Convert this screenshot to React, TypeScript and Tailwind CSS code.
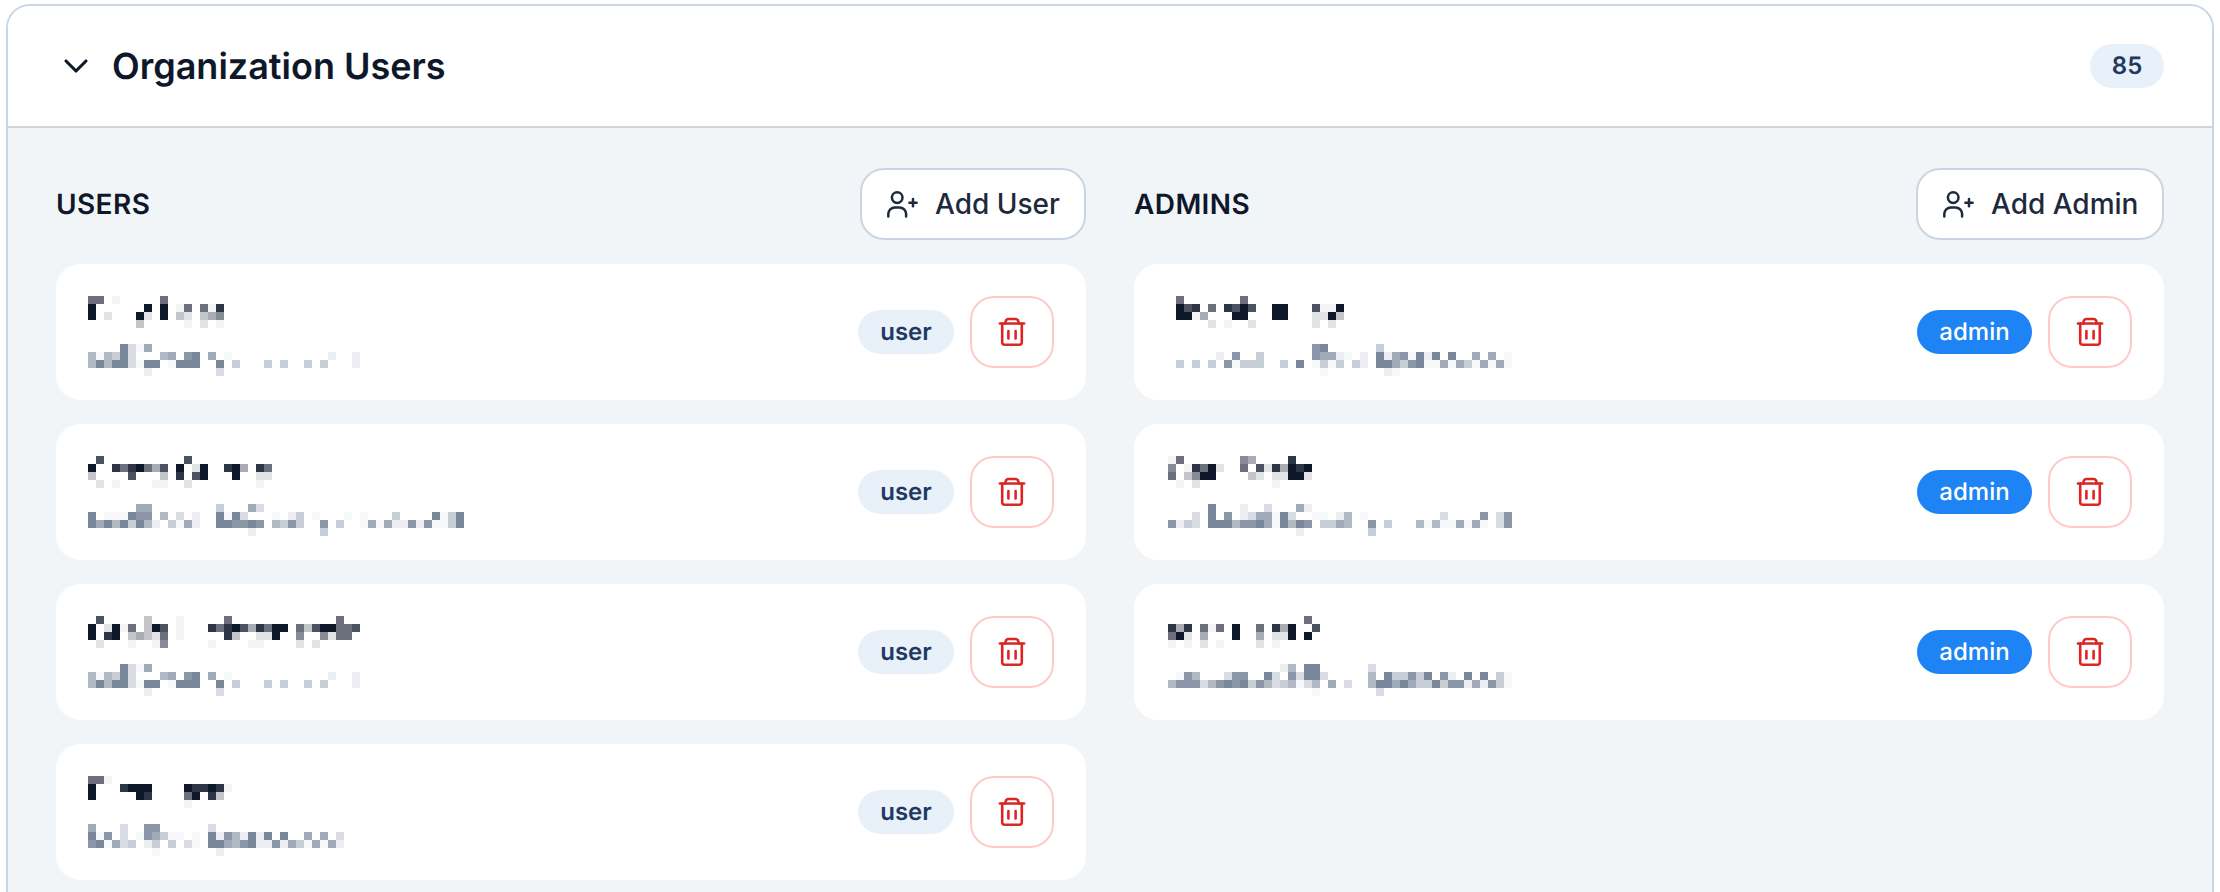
import { ChevronDown } from "lucide-react";

// names and emails are masked in the source picture, so each is a grid of shade digits
const OPACITY: Record<string, number> = {
  "1": 0.05,
  "2": 0.12,
  "3": 0.25,
  "4": 0.36,
  "5": 0.5,
  "6": 0.62,
  "7": 0.75,
  "8": 0.87,
  "9": 1,
};

interface Member {
  name: string[];
  email: string[];
}

const email1 = [
  "....8316",
  "515483...56.78.6.1............2..2",
  "585883188.1888..8.4...4.4..4.4...2",
  ".......2........3",
];

const users: Member[] = [
  {
    name: [
      "66.1.....6",
      "9......9.9.16.618",
      "9.2...92.9.32.345",
      "......3.....1.2.1",
    ],
    email: email1,
  },
  {
    name: [
      ".7..........7",
      "9..8689647.9.29..894.86",
      "3....7...3.8.79...9..22",
      ".2.1....11..2........1",
    ],
    email: [
      "......66........4...63",
      "8.111877.5.3.2..8183...1.24.1...1.1...4....8148",
      "868584852.4162..887787.5474..7.4..1616227271148",
      "....................2........4",
    ],
  },
  {
    name: [
      ".7.....3...1.....6.............6",
      "9.2916.397.1...8689748699.63799667",
      "9.89.34326.1.....83..229..5..5266",
      ".2...1..15.....1....11....2.2",
    ],
    email: email1,
  },
  {
    name: [
      "661",
      "9...8999....988981",
      "9.....98....69.83",
      "............1",
    ],
    email: [
      "6...3..77......3",
      "817.3.176411.1.82752828.8..6.6.3",
      "781634.24.4.31.88657822726416162",
      "........1.......2",
    ],
  },
];

const admins: Member[] = [
  {
    name: [
      ".6.......6",
      ".978.6.8797..99...7119",
      ".9914...99...99...2293",
      ".....2.1..2.......2.2",
    ],
    email: [
      "..................78......4",
      "......2.7..4......76621.2.82671828.8..6.6.1",
      ".4.4.4.71444..4.8.1414.42.88647811616416161",
      "...................1.......21",
    ],
  },
  {
    name: [
      "16.......54....8",
      "5.18692..6.7284989",
      "6.3599....32.22992",
      ".1.2.........1",
    ],
    email: [
      ".....8...2..3...62",
      "...3.8.7.2366183..11.25.1.........3....7.37",
      "7243.8885778618587.4465..7.4...515116161.37",
      "................2........4",
    ],
  },
  {
    name: [
      ".................6",
      "848.616.9..6.849..7",
      "692.4...9..4.229.9",
      "1.1.2.1....2.1",
    ],
    email: [
      "..............25.88......3",
      ".175...377..83.73883.....5.844748.72.8.8.41",
      "5777357878475345135.6.3..588686448477262741",
      "..................1.......3",
    ],
  },
];

function Mosaic({ rows, color }: { rows: string[]; color: string }) {
  const cols = Math.max(...rows.map((r) => r.length));
  return (
    <svg
      width={cols * 8}
      height={32}
      viewBox={`0 0 ${cols * 8} 32`}
      shapeRendering="crispEdges"
      className="block"
      aria-hidden="true"
    >
      {rows.map((row, y) =>
        row.split("").map((c, x) =>
          c === "." ? null : (
            <rect
              key={`${x}-${y}`}
              x={x * 8}
              y={y * 8}
              width={8}
              height={8}
              fill={color}
              fillOpacity={OPACITY[c]}
            />
          ),
        ),
      )}
    </svg>
  );
}

function TrashIcon() {
  return (
    <svg
      width="28"
      height="32"
      viewBox="0 0 28 32"
      fill="none"
      stroke="#dc2626"
      strokeWidth="2.6"
      strokeLinecap="round"
      strokeLinejoin="round"
      aria-hidden="true"
    >
      <path d="M1.9 7.5h24.2" />
      <path d="M4.2 7.5v18.8a2.5 2.5 0 0 0 2.5 2.5h14.6a2.5 2.5 0 0 0 2.5-2.5V7.5" />
      <path d="M7.5 7.5V6a3 3 0 0 1 3-3h7a3 3 0 0 1 3 3v1.5" />
      <path d="M10.4 15v7.4" />
      <path d="M17.6 15v7.4" />
    </svg>
  );
}

function AddPersonIcon() {
  return (
    <svg
      width="31"
      height="27"
      viewBox="0 0 31 27"
      fill="none"
      stroke="currentColor"
      strokeWidth="2.5"
      strokeLinecap="round"
      strokeLinejoin="round"
      aria-hidden="true"
    >
      <circle cx="10.2" cy="6.6" r="5.3" />
      <path d="M1.3 25.5v-2.4a6.6 6.6 0 0 1 6.6-6.6h4.6a6.6 6.6 0 0 1 6.6 6.6v2.4" />
      <path d="M22.4 11.7h7.2" />
      <path d="M26 8.1v7.2" />
    </svg>
  );
}

function MemberRow({
  member,
  role,
  gridOffset,
}: {
  member: Member;
  role: "user" | "admin";
  gridOffset?: boolean;
}) {
  return (
    <div className="flex h-[136px] items-center justify-between rounded-3xl bg-white px-8">
      <div className={`mt-2 flex flex-col gap-4 ${gridOffset ? "ml-0.5" : ""}`}>
        <Mosaic rows={member.name} color="#0f172a" />
        <Mosaic rows={member.email} color="#64748b" />
      </div>
      <div className="flex items-center gap-4">
        {role === "admin" ? (
          <span className="flex h-11 w-[115px] items-center justify-center rounded-full bg-[#1e84f5] text-[24px] font-medium text-white">
            admin
          </span>
        ) : (
          <span className="flex h-11 w-24 items-center justify-center rounded-full bg-[#e8f0fa] text-[24px] font-semibold text-[#1e3a5f]">
            user
          </span>
        )}
        <button
          type="button"
          className="flex h-[72px] w-[84px] items-center justify-center rounded-3xl border-2 border-[#fecaca] bg-white"
        >
          <TrashIcon />
        </button>
      </div>
    </div>
  );
}

function Column({
  title,
  action,
  members,
  role,
  buttonWidth,
}: {
  title: string;
  action: string;
  members: Member[];
  role: "user" | "admin";
  buttonWidth: string;
}) {
  return (
    <div className="min-w-0">
      <div className="mb-6 flex items-center justify-between">
        <h3 className="text-[28px] font-semibold tracking-[0.4px] text-[#0f172a]">
          {title}
        </h3>
        <button
          type="button"
          className={`flex h-[72px] items-center gap-[17px] rounded-3xl border-2 border-[#cbd5e1] bg-white pl-[25px] text-[28px] font-medium text-[#1e293b] ${buttonWidth}`}
        >
          <AddPersonIcon />
          {action}
        </button>
      </div>
      <div className="flex flex-col gap-6">
        {members.map((member, i) => (
          <MemberRow
            key={i}
            member={member}
            role={role}
            gridOffset={role === "admin"}
          />
        ))}
      </div>
    </div>
  );
}

export default function App() {
  return (
    <div className="h-screen overflow-hidden bg-white px-1.5 pt-1 font-['Inter',sans-serif] [text-rendering:geometricPrecision]">
      <section className="overflow-hidden rounded-t-3xl border-2 border-[#c9d6e8]">
        <header className="flex h-[122px] items-center justify-between border-b-2 border-[#d4d4d8] bg-white px-12">
          <div className="flex items-center gap-4">
            <ChevronDown className="size-10 text-[#0f172a]" strokeWidth={1.9} aria-hidden="true" />
            <h2 className="text-[36px] font-semibold text-[#0f172a]">
              Organization Users
            </h2>
          </div>
          <span className="flex h-11 w-[74px] items-center justify-center rounded-full bg-[#e8f0fa] text-[24px] font-semibold text-[#1e3a5f]">
            85
          </span>
        </header>
        <div className="grid grid-cols-2 gap-12 bg-[#f1f5f8] px-12 pt-10 pb-10">
          <Column
            title="USERS"
            action="Add User"
            members={users}
            role="user"
            buttonWidth="w-[226px]"
          />
          <Column
            title="ADMINS"
            action="Add Admin"
            members={admins}
            role="admin"
            buttonWidth="w-[248px]"
          />
        </div>
      </section>
    </div>
  );
}
